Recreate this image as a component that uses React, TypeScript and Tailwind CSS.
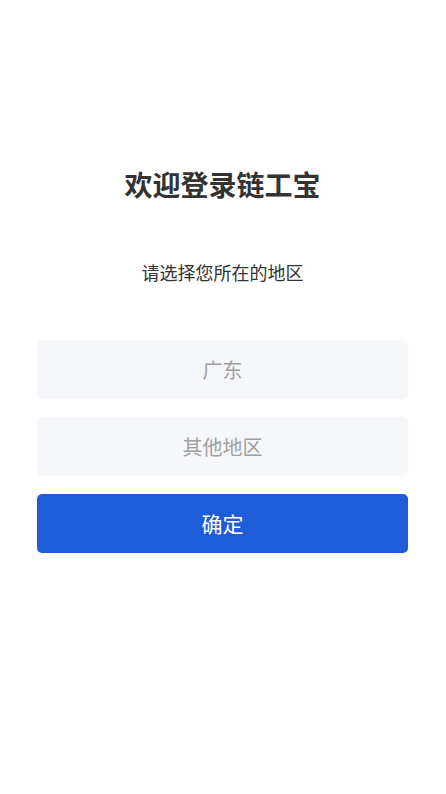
import React, { useState } from 'react';

const REGIONS = ['广东', '其他地区'] as const;

export default function App() {
  const [region, setRegion] = useState<string | null>(null);

  return (
    <div
      className="min-h-[794px] bg-white pl-[37px] pr-[38px] pt-[164px]"
      style={{ fontFamily: '"Noto Sans CJK SC", "Noto Sans", sans-serif' }}
    >
      <h1 className="text-center text-[28px] leading-[40px] font-bold text-[#333333]">
        欢迎登录链工宝
      </h1>
      <p className="mt-[56px] text-center text-[18px] leading-[24px] text-[#333333]">
        请选择您所在的地区
      </p>

      <div className="mt-[56px] flex flex-col gap-[18px]">
        {REGIONS.map((r) => (
          <button
            key={r}
            onClick={() => setRegion(r)}
            className={`h-[59px] w-full rounded-[5px] bg-[#f6f7fb] text-center text-[20px] ${
              region === r ? 'text-[#333333]' : 'text-[#a0a0a0]'
            }`}
          >
            {r}
          </button>
        ))}
        <button className="h-[59px] w-full rounded-[5px] bg-[#1f5cd9] text-center text-[21px] text-white">
          确定
        </button>
      </div>
    </div>
  );
}
